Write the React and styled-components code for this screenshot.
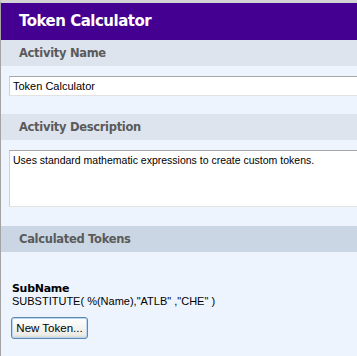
import React from 'react'
import styled, { createGlobalStyle } from 'styled-components'

const Global = createGlobalStyle`
html, body {
    margin: 0;
    padding: 0;
    background: #eef4fd;
    overflow: hidden;
}
`

const Page = styled.div`
width: 357px;
height: 356px;
box-sizing: border-box;
border-top: 3px solid #d4d4d4;
border-left: 1px solid #a3a3a3;
background: #eef4fd;
font-family: Tahoma, "DejaVu Sans", "Liberation Sans", sans-serif;
overflow: hidden;
`

const TitleBar = styled.div`
height: 37px;
line-height: 37px;
padding-left: 18px;
background: #440090;
color: #ffffff;
font-family: "DejaVu Sans", sans-serif;
font-weight: bold;
font-size: 15px;
letter-spacing: -0.5px;
`

const SectionBar = styled.div`
height: 26px;
line-height: 26px;
padding-left: 18px;
background: ${props => props.dark ? '#cad6e3' : '#dde4ee'};
color: #5a5a5a;
font-family: "DejaVu Sans", sans-serif;
font-weight: bold;
font-size: 11.5px;
letter-spacing: -0.3px;
`

const SectionBody = styled.div`
padding: ${props => props.pad || '10px 0 18px 8px'};
`

const Field = styled.div`
width: 420px;
height: ${props => props.tall ? '57px' : '20px'};
box-sizing: border-box;
background: #ffffff;
border-top: 1px solid #a7a7a7;
border-left: 1px solid #d0d0d0;
border-bottom: 1px solid #e2e2e2;
padding: ${props => props.tall ? '2px 3px' : '0 3px'};
line-height: ${props => props.tall ? '14px' : '18px'};
font-family: "Liberation Sans", sans-serif;
font-size: ${props => props.tall ? '10.5px' : '11px'};
color: #000000;
`

const TokenName = styled.div`
padding-left: 3px;
font-family: "DejaVu Sans", sans-serif;
font-weight: bold;
font-size: 11px;
letter-spacing: -0.3px;
line-height: 13px;
color: #000000;
`

const TokenExpr = styled.div`
padding-left: 3px;
font-family: "Liberation Sans", sans-serif;
font-size: 11px;
line-height: 13px;
color: #000000;
`

const Button = styled.button`
margin: 9px 0 0 2px;
width: 77px;
height: 22px;
padding: 0;
border: 1px solid #5d87b0;
border-radius: 3px;
box-shadow: inset 0 0 0 1px #b9d7f2;
background: linear-gradient(#ffffff, #ecebe6 85%, #d6d0c5);
font-family: "Liberation Sans", sans-serif;
font-size: 11.5px;
color: #000000;
`

export default function App() {
    return (
        <Page>
            <Global />
            <TitleBar>Token Calculator</TitleBar>
            <SectionBar>Activity Name</SectionBar>
            <SectionBody>
                <Field>Token Calculator</Field>
            </SectionBody>
            <SectionBar>Activity Description</SectionBar>
            <SectionBody pad="10px 0 19px 8px">
                <Field tall>Uses standard mathematic expressions to create custom tokens.</Field>
            </SectionBody>
            <SectionBar dark>Calculated Tokens</SectionBar>
            <SectionBody pad="30px 0 0 8px">
                <TokenName>SubName</TokenName>
                <TokenExpr>SUBSTITUTE( %(Name),"ATLB" ,"CHE" )</TokenExpr>
                <Button>New Token...</Button>
            </SectionBody>
        </Page>
    )
}
